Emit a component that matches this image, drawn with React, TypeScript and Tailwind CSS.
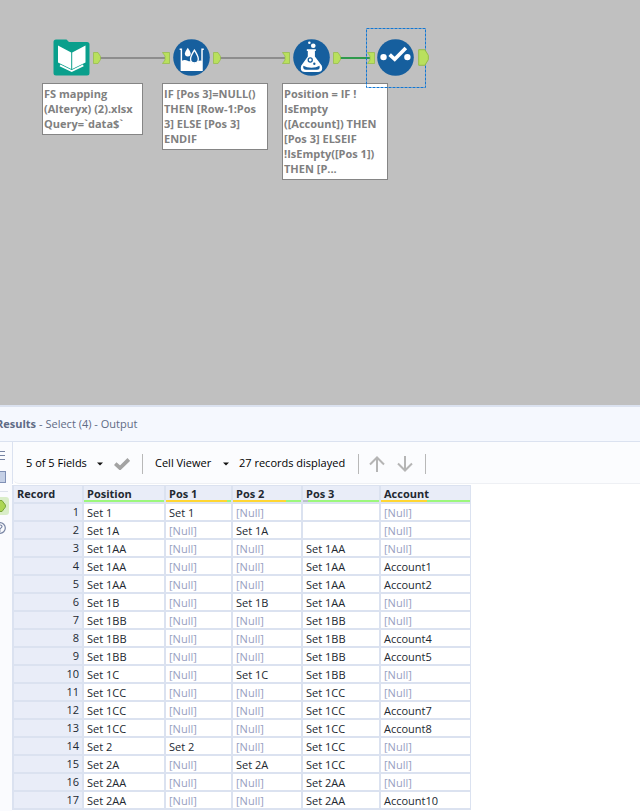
import type { ReactNode } from 'react'

interface ResultRow {
  position: string
  pos1: string | null
  pos2: string | null
  pos3: string | null
  account: string | null
}

const row = (
  position: string,
  pos1: string | null,
  pos2: string | null,
  pos3: string | null,
  account: string | null,
): ResultRow => ({ position, pos1, pos2, pos3, account })

const ROWS: ResultRow[] = [
  row('Set 1', 'Set 1', null, '', null),
  row('Set 1A', null, 'Set 1A', '', null),
  row('Set 1AA', null, null, 'Set 1AA', null),
  row('Set 1AA', null, null, 'Set 1AA', 'Account1'),
  row('Set 1AA', null, null, 'Set 1AA', 'Account2'),
  row('Set 1B', null, 'Set 1B', 'Set 1AA', null),
  row('Set 1BB', null, null, 'Set 1BB', null),
  row('Set 1BB', null, null, 'Set 1BB', 'Account4'),
  row('Set 1BB', null, null, 'Set 1BB', 'Account5'),
  row('Set 1C', null, 'Set 1C', 'Set 1BB', null),
  row('Set 1CC', null, null, 'Set 1CC', null),
  row('Set 1CC', null, null, 'Set 1CC', 'Account7'),
  row('Set 1CC', null, null, 'Set 1CC', 'Account8'),
  row('Set 2', 'Set 2', null, 'Set 1CC', null),
  row('Set 2A', null, 'Set 2A', 'Set 1CC', null),
  row('Set 2AA', null, null, 'Set 2AA', null),
  row('Set 2AA', null, null, 'Set 2AA', 'Account10'),
]

// share of null / empty values, drawn under each column title
const COLUMNS: { key: keyof ResultRow; label: string; width: string; nulls: number; empty: number }[] = [
  { key: 'position', label: 'Position', width: 'w-[82px]', nulls: 0, empty: 0 },
  { key: 'pos1', label: 'Pos 1', width: 'w-[67px]', nulls: 94, empty: 0 },
  { key: 'pos2', label: 'Pos 2', width: 'w-[70px]', nulls: 78, empty: 0 },
  { key: 'pos3', label: 'Pos 3', width: 'w-[78px]', nulls: 0, empty: 6 },
  { key: 'account', label: 'Account', width: 'w-[90px]', nulls: 52, empty: 0 },
]

function OutAnchor({ className }: { className: string }) {
  return (
    <svg className={`absolute ${className}`} viewBox="0 0 8 12" preserveAspectRatio="none">
      <path d="M.5 .5H5L7.5 4.5V7.5L5 11.5H.5Z" fill="#b9e05e" stroke="#93bb45" strokeWidth="0.7" />
    </svg>
  )
}

function InAnchor({ className }: { className: string }) {
  return (
    <svg className={`absolute h-3 w-2 ${className}`} viewBox="0 0 8 12">
      <path d="M.5 .5H7.5V11.5H.5L3 8V4Z" fill="#b9e05e" stroke="#93bb45" strokeWidth="0.7" />
    </svg>
  )
}

function CircleTool({ className, children }: { className: string; children: ReactNode }) {
  return (
    <svg className={`absolute size-[37px] ${className}`} viewBox="0 0 38 38">
      <circle cx="19" cy="19" r="18.8" fill="#165f9e" />
      {children}
    </svg>
  )
}

function Annotation({ className, children }: { className: string; children: string }) {
  return (
    <p className={`absolute whitespace-pre border border-[#858585] bg-white px-px pt-0.5 pb-[3px] text-[11px] leading-[15px] font-bold text-[#808080] ${className}`}>
      {children}
    </p>
  )
}

function Canvas() {
  return (
    <section aria-label="Workflow" className="relative h-[405px] shrink-0 overflow-hidden bg-[#c0c0c0]">
      {/* connections */}
      <div className="absolute top-[57px] left-[100px] h-0.5 w-[66px] bg-[#8d8d8d]" />
      <div className="absolute top-[57px] left-[220px] h-0.5 w-[66px] bg-[#8d8d8d]" />
      <div className="absolute top-[57px] left-[340px] h-0.5 w-[32px] bg-[#2f9a4c]" />

      {/* input data */}
      <svg className="absolute top-[39px] left-[53px] h-[37px] w-[37px]" viewBox="0 0 37 37">
        <path d="M3 .5H13.5L16 3H34Q36.5 3 36.5 5.5V34Q36.5 36.5 34 36.5H3Q.5 36.5 .5 34V3Q.5 .5 3 .5Z" fill="#0a9f8c" />
        <path d="M5 6.5L18.2 13.5V30L5 23.5Z M32.5 6.5L19.2 13.5V30L32.5 23.5Z" fill="#fff" />
        <path d="M7 26.4L18.7 32L30.3 26.4" fill="none" stroke="#fff" strokeWidth="1.8" />
      </svg>
      <OutAnchor className="top-[52px] left-[93px] h-3 w-2" />
      <Annotation className="top-[83px] left-[42px] w-[101px]">
        {'FS mapping\n(Alteryx) (2).xlsx\nQuery=`data$`'}
      </Annotation>

      {/* multi-row formula */}
      <InAnchor className="top-[52px] left-[162px]" />
      <CircleTool className="top-[39px] left-[173px]">
        <path d="M6.8 10.6H8.6V32.2H29.8V10.6H31.6" fill="none" stroke="#fff" strokeWidth="1.5" />
        <path d="M8.6 22.5Q12 20.8 15 22.3Q17 23.4 18.5 22.6Q22 27 26 22.6Q28 21.6 29.8 22.5V32.5H8.6Z" fill="#fff" />
        <path d="M15.2 9Q12.2 13.4 12.2 15A3 3 0 0 0 18.2 15Q18.2 13.4 15.2 9Z" fill="#fff" />
        <path d="M22 11.5Q18 17.8 18 20.5A4 4 0 0 0 26 20.5Q26 17.8 22 11.5Z" fill="#165f9e" stroke="#fff" strokeWidth="1.4" />
      </CircleTool>
      <OutAnchor className="top-[52px] left-[213px] h-3 w-2" />
      <Annotation className="top-[83px] left-[162px] w-[106px]">
        {'IF [Pos 3]=NULL()\nTHEN [Row-1:Pos\n3] ELSE [Pos 3]\nENDIF'}
      </Annotation>

      {/* formula */}
      <InAnchor className="top-[52px] left-[282px]" />
      <CircleTool className="top-[39px] left-[293px]">
        <path d="M14.2 10.5H23.4V12.4H22.5V18L29.6 27.5Q31.5 33.8 26 33.8H12Q6.5 33.8 8.4 27.5L15.2 18V12.4H14.2Z" fill="#fff" />
        <path d="M10.6 27.6Q14 29.6 19 29.6Q24 29.6 27.2 27.6Q28.2 31.6 24.5 31.6H13.5Q9.8 31.6 10.6 27.6Z" fill="#165f9e" />
        <circle cx="17.7" cy="21.6" r="2.1" fill="none" stroke="#165f9e" strokeWidth="1.3" />
        <circle cx="21.9" cy="25.4" r="1.2" fill="#165f9e" />
        <circle cx="20.8" cy="6.9" r="2.4" fill="#fff" />
        <circle cx="16.8" cy="3.8" r="1.3" fill="#fff" />
      </CircleTool>
      <OutAnchor className="top-[52px] left-[333px] h-3 w-2" />
      <Annotation className="top-[83px] left-[282px] w-[106px]">
        {'Position = IF !\nIsEmpty\n([Account]) THEN\n[Pos 3] ELSEIF\n!IsEmpty([Pos 1])\nTHEN [P...'}
      </Annotation>

      {/* select, currently picked */}
      <InAnchor className="top-[52px] left-[367px]" />
      <CircleTool className="top-[39px] left-[377px]">
        <circle cx="6.7" cy="18.6" r="3.3" fill="#fff" />
        <circle cx="31.2" cy="18.6" r="3.3" fill="#fff" />
        <path d="M13 16L18.2 20.8L29.6 9.3" fill="none" stroke="#fff" strokeWidth="3.8" />
      </CircleTool>
      <svg className="absolute top-[28px] left-[366px] h-[60px] w-[60px]" viewBox="0 0 60 60">
        <rect x="0.5" y="0.5" width="59" height="59" fill="none" stroke="#1277d3" strokeDasharray="3 1" />
      </svg>
      <OutAnchor className="top-[49px] left-[418px] h-[17px] w-[11px]" />
    </section>
  )
}

function Caret() {
  return (
    <svg className="h-1 w-[6px]" viewBox="0 0 6 4">
      <path d="M0 .5H6L3 3.5Z" fill="#111" />
    </svg>
  )
}

function Arrow({ down = false }: { down?: boolean }) {
  return (
    <svg className={`size-4 ${down ? 'rotate-180' : ''}`} viewBox="0 0 16 16" fill="none" stroke="#b5b5b5" strokeWidth="2">
      <path d="M8 16V1.5M1 8.5L8 1.5L15 8.5" />
    </svg>
  )
}

function Divider() {
  return <div className="h-5 w-px bg-[#b8b8b8]" />
}

function Toolbar() {
  return (
    <div className="flex h-[42px] items-center rounded-bl-md border-b border-[#eef0f4] bg-[#fbfcfe] pt-0.5 pl-[13px] text-[11px] text-black">
      <button className="flex w-[77px] items-center justify-between">
        5 of 5 Fields
        <Caret />
      </button>
      <button aria-label="Apply" className="ml-[11px]">
        <svg className="h-3 w-4" viewBox="0 0 16 12">
          <path d="M1.2 5.6L6 10L14.8 1.4" fill="none" stroke="#a3a3a3" strokeWidth="3.8" />
        </svg>
      </button>
      <div className="ml-3">
        <Divider />
      </div>
      <button className="ml-3 flex w-[74px] items-center justify-between">
        Cell Viewer
        <Caret />
      </button>
      <span className="ml-2.5 w-[119px] whitespace-nowrap">27 records displayed</span>
      <Divider />
      <button aria-label="Previous" className="ml-2.5">
        <Arrow />
      </button>
      <button aria-label="Next" className="ml-3">
        <Arrow down />
      </button>
      <div className="ml-3">
        <Divider />
      </div>
    </div>
  )
}

function Sidebar() {
  return (
    <nav className="flex w-3 shrink-0 flex-col items-end overflow-hidden bg-[#fafbfe]">
      <button aria-label="Messages" className="mt-[9px] mr-[7px]">
        <svg className="h-[9px] w-3" viewBox="0 0 12 9" stroke="#7784a3">
          <path d="M0 .5H12M0 4.5H12M0 8.5H12" />
        </svg>
      </button>
      <button aria-label="Metadata" className="mt-[11px] mr-1.5 h-3 w-3.5 border border-[#8090b5] bg-[#c5d0e6]" />
      <div className="mt-2 mr-1 h-px w-4 bg-[#dde2ec]" />
      <button aria-label="Output anchor" className="mt-[5px] mr-[3px] h-[18px] w-5 rounded-[3px] bg-[#d9edc8]">
        <svg className="mr-[3px] ml-auto h-3 w-3.5" viewBox="0 0 14 12">
          <path d="M0 .5H10L13.4 5V7L10 11.5H0Z" fill="#acd653" stroke="#79a63a" />
        </svg>
      </button>
      <button aria-label="Help" className="mt-[7px] mr-1.5">
        <svg className="size-3" viewBox="0 0 12 12" fill="none" stroke="#7784a3" strokeWidth="1.2">
          <circle cx="6" cy="6" r="5.3" />
          <path d="M4.3 4.8Q4.3 3 6.2 3Q8 3 8 4.6Q8 5.6 6.2 6.5V7.5M6.2 8.5V9.5" />
        </svg>
      </button>
    </nav>
  )
}

function ResultsTable() {
  return (
    <table className="w-[459px] table-fixed border-separate border-spacing-0 border-t border-l-2 border-[#dbe2f0] text-[11px] leading-4 text-[#222831]">
      <thead>
        <tr>
          <th className="h-[18px] w-[70px] border-r-2 border-b-2 border-[#dbe2f0] bg-[#e9edf8] p-0 pl-[3px] text-left font-bold">Record</th>
          {COLUMNS.map((col) => (
            <th key={col.key} className={`border-r-2 border-b-2 border-[#dbe2f0] bg-[#e9edf8] p-0 text-left font-bold last:border-r ${col.width}`}>
              <div className="h-3.5 pl-[3px]">{col.label}</div>
              <div className="flex h-0.5 bg-[#9cf77c]">
                <div className="bg-[#ffd632]" style={{ width: `${col.nulls}%` }} />
                <div className="bg-[#bcc0ca]" style={{ width: `${col.empty}%` }} />
              </div>
            </th>
          ))}
        </tr>
      </thead>
      <tbody>
        {ROWS.map((item, i) => (
          <tr key={i}>
            <td className="h-[18px] border-r-2 border-b-2 border-[#dbe2f0] bg-[#e9edf8] p-0 pr-[3px] text-right">{i + 1}</td>
            {COLUMNS.map((col) => (
              <td
                key={col.key}
                className={`border-r-2 border-b-2 border-[#dbe2f0] bg-white p-0 pt-0.5 pl-[3px] leading-3.5 last:border-r ${item[col.key] === null ? 'text-[#98a0bf]' : ''}`}
              >
                {item[col.key] ?? '[Null]'}
              </td>
            ))}
          </tr>
        ))}
      </tbody>
    </table>
  )
}

export default function App() {
  return (
    <div className="flex h-screen flex-col overflow-hidden bg-white font-['Open_Sans','Noto_Sans',sans-serif]">
      <Canvas />
      <section className="flex min-h-0 flex-1 flex-col border-t-2 border-[#dbe2f0]">
        <header className="flex h-[35px] shrink-0 items-center gap-[3px] border-b border-[#dbe2f0] bg-[#f5f8fe] text-[11px] text-[#5f6b85]">
          <h2 className="-ml-1 font-bold">Results</h2>
          <span>- Select (4) - Output</span>
        </header>
        <div className="flex min-h-0 flex-1">
          <Sidebar />
          <div className="min-w-0 flex-1 overflow-hidden">
            <div className="mb-px border-l border-[#dbe2f0]">
              <Toolbar />
            </div>
            <ResultsTable />
          </div>
        </div>
      </section>
    </div>
  )
}
